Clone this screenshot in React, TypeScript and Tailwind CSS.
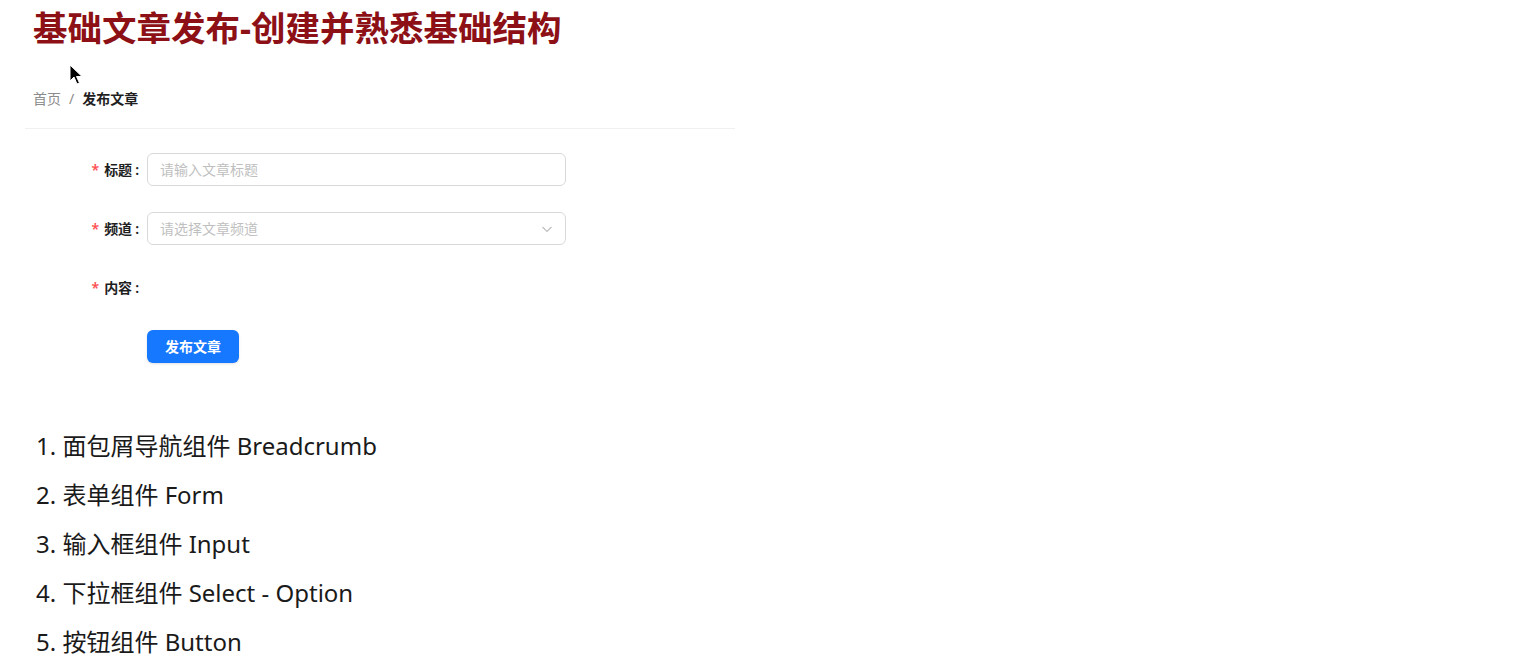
const cjk = { fontFamily: '"Noto Sans", "Noto Sans CJK SC", sans-serif' };

const items = [
  "1. 面包屑导航组件 Breadcrumb",
  "2. 表单组件 Form",
  "3. 输入框组件 Input",
  "4. 下拉框组件 Select - Option",
  "5. 按钮组件 Button",
];

function Label({ text }: { text: string }) {
  return (
    <div className="w-[122px] shrink-0 text-right text-[14px] font-semibold text-[#1f1f1f]">
      <span className="mr-[5px] text-[#ff4d4f]">*</span>
      {text}
      <span className="ml-[3px] mr-[8px]">:</span>
    </div>
  );
}

export default function App() {
  return (
    <div className="relative min-h-screen bg-white" style={cjk}>
      {/* mouse pointer */}
      <svg className="absolute left-[69px] top-[64px]" width="14" height="22" viewBox="0 0 14 22">
        <path d="M1 1 L1 17 L5 13 L8 20 L10.5 19 L7.5 12.5 L13 12.5 Z" fill="#000" stroke="#fff" strokeWidth="1" />
      </svg>

      <div className="ml-[25px] w-[710px]">
        <div className="border-b border-[#f0f0f0] pb-[18px]">
          <h1 className="pl-2 pt-2 text-[34.5px] font-bold leading-[40px] text-[#8c1016]">
            基础文章发布-创建并熟悉基础结构
          </h1>
          <div className="mt-10 flex items-center gap-2 pl-2 text-[14px] leading-[22px]">
            <span className="text-[#8c8c8c]">首页</span>
            <span className="text-[#8c8c8c]">/</span>
            <span className="font-bold text-[#1f1f1f]">发布文章</span>
          </div>
        </div>

        <form className="mt-6">
          <div className="mb-[26px] flex h-[33px] items-center">
            <Label text="标题" />
            <div className="flex h-[33px] w-[419px] items-center rounded-md border border-[#d9d9d9] px-3 text-[14px] text-[#bfbfbf]">
              请输入文章标题
            </div>
          </div>
          <div className="mb-[26px] flex h-[33px] items-center">
            <Label text="频道" />
            <div className="flex h-[33px] w-[419px] items-center justify-between rounded-md border border-[#d9d9d9] px-3 text-[14px] text-[#bfbfbf]">
              <span>请选择文章频道</span>
              <svg width="12" height="12" viewBox="0 0 12 12" fill="none" stroke="#bfbfbf" strokeWidth="1.2">
                <path d="M1.5 4 L6 8.5 L10.5 4" />
              </svg>
            </div>
          </div>
          <div className="mb-[26px] flex h-[33px] items-center">
            <Label text="内容" />
          </div>
          <div className="flex h-[33px] items-center pl-[122px]">
            <button type="button" className="h-[33px] w-[92px] rounded-md bg-[#1677ff] text-[14px] font-semibold text-white shadow-sm">
              发布文章
            </button>
          </div>
        </form>

        <ol className="mt-[58px] pl-[11px] text-[24px] leading-[49px] text-[#1a1a1a]">
          {items.map((t) => (
            <li key={t}>{t}</li>
          ))}
        </ol>
      </div>
    </div>
  );
}
